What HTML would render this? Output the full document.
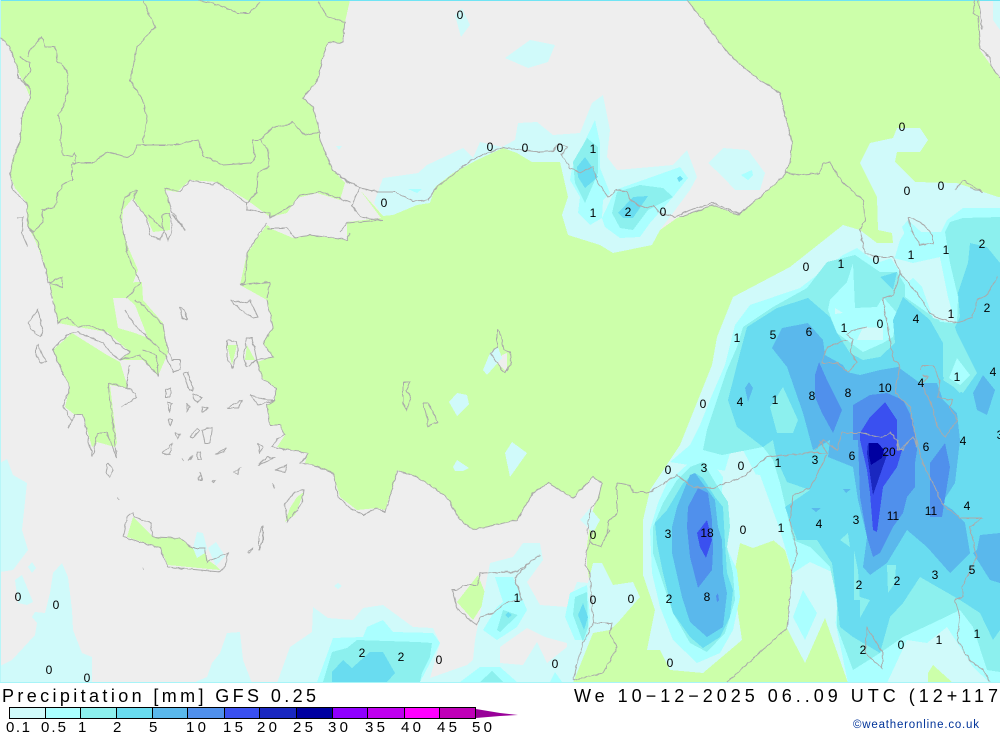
<!DOCTYPE html>
<html><head><meta charset="utf-8"><title>Precipitation</title>
<style>
html,body{margin:0;padding:0;background:#fff;width:1000px;height:733px;overflow:hidden}
svg{display:block}
.p polygon{shape-rendering:crispEdges}
.c1{fill:#d0fafa}.c2{fill:#aaffff}.c3{fill:#8cf0ee}.c4{fill:#69dcf0}.c5{fill:#5ab8ec}.c6{fill:#5090ec}.c7{fill:#3a50f0}.c8{fill:#1a28c0}.c9{fill:#0000a0}
.s{fill:#eeeeee}.l{fill:#ccffaa}
.b polyline{fill:none;stroke:#aaaaaa;stroke-width:1}
.n text{font:12px "Liberation Sans",sans-serif;fill:#000;text-anchor:middle}
.t{font-family:"Liberation Sans",sans-serif;fill:#000}
</style></head><body>
<svg width="1000" height="733" viewBox="0 0 1000 733" xmlns="http://www.w3.org/2000/svg">
<defs><filter id="w" x="0" y="0" width="1" height="1" filterUnits="objectBoundingBox"><feTurbulence type="fractalNoise" baseFrequency="0.22" numOctaves="1" seed="3"/><feDisplacementMap in="SourceGraphic" scale="3.5" xChannelSelector="R" yChannelSelector="G"/></filter></defs>
<rect width="1000" height="733" fill="#fff"/>
<g class="p">
<rect width="1000" height="683" fill="#ccffaa"/>
<polygon class="s" points="350,0 345,22 342,43 328,42 322,60 318,80 308,92 303,98 313,107 320,132 320,140 333,170 345,183 360,190 383,216 393,215 417,205 430,203 435,187 453,173 477,160 503,148 517,153 532,162 560,162 568,197 562,215 568,235 600,245 613,253 652,245 660,230 677,218 713,205 738,215 760,197 783,177 790,163 792,143 780,93 760,80 738,63 723,47 703,20 687,0"/>
<polygon class="s" points="980,0 1000,0 1000,78 980,50"/>
<polygon class="s" points="0,38 6,42 12,52 18,72 25,85 30,97 22,118 20,140 12,160 10,175 15,188 27,203 27,225 35,240 45,265 50,285 127,298 138,270 128,247 122,227 123,210 133,198 147,218 153,232 170,230 170,203 165,190 177,192 190,180 217,182 247,200 270,217 287,213 297,198 317,193 340,200 345,183 360,190 381,218 347,222 347,240 310,235 293,238 267,227 247,253 240,285 267,300 273,327 263,343 273,357 257,362 262,378 276,388 275,400 267,405 270,425 280,425 285,435 277,447 308,453 305,463 313,465 333,473 340,497 357,510 377,508 385,510 393,487 397,470 417,477 447,497 460,520 473,530 517,520 533,493 548,483 573,498 593,477 602,483 598,497 593,510 590,525 587,545 587,565 592,600 593,633 585,650 573,683 0,683"/>
<polygon class="l" points="50,285 142,282 143,300 163,323 168,353 158,376 143,360 120,360 130,352 107,332 78,327 58,323"/>
<polygon class="s" points="113,298 127,298 135,305 148,338 135,333 118,328"/>
<polygon class="l" points="53,350 72,333 107,355 120,362 128,388 110,385 117,443 115,447 97,442 92,447 83,415 75,415 65,407 70,387 60,367"/>
<polygon class="l" points="133,517 153,537 180,538 193,548 197,558 205,553 208,560 215,565 220,570 168,565 160,548 127,537"/>
<polygon class="l" points="304,492 297,497 290,508 285,522 295,515"/>
<polygon class="l" points="253,243 267,225 270,227 258,245"/>
<polygon class="l" points="227,345 237,345 232,365"/><polygon class="l" points="247,345 255,360 245,360"/>
<polygon class="l" points="457,602 478,575 487,598 473,620"/>
<polygon class="s" points="502,355 507,353 507,372 497,363"/>
<polygon class="c1" points="490,353 498,347 502,358 487,375 483,370"/>
<polygon class="c1" points="457,393 467,395 469,404 457,416 449,402"/>
<polygon class="c1" points="505,453 512,442 527,453 510,477"/>
<polygon class="c1" points="453,467 457,460 469,468 463,471 455,471"/>
<polygon class="c1" points="580,520 590,508 600,520 593,533"/>
<polygon class="c1" points="193,548 197,532 203,533 207,548 205,553 197,558"/>
<polygon class="c1" points="208,548 216,542 225,556 216,566"/>
<polygon class="c1" points="0,463 7,459 13,475 27,483 22,530 28,550 13,570 0,572"/>
<polygon class="c1" points="28,567 32,562 36,568 32,573"/>
<polygon class="c1" points="15,580 22,575 33,602 27,605 18,603"/>
<polygon class="c1" points="53,573 62,563 68,577 72,610 73,630 82,653 92,657 92,683 0,683 0,666 12,660 35,635 37,623 32,617 35,612 45,613 50,593"/>
<polygon class="c1" points="193,683 207,677 212,663 220,653 227,633 240,632 243,660 252,683"/>
<polygon class="c1" points="455,15 462,8 470,25 461,37"/>
<polygon class="c1" points="505,58 530,40 555,45 548,62 528,68"/>
<polygon class="c1" points="993,0 1000,0 1000,30 993,20"/>
<polygon class="c1" points="336,146 342,146 339,150"/>
<polygon class="c1" points="374,203 383,178 418,173 427,165 463,148 473,158 480,142 502,147 515,140 518,123 537,122 553,135 580,133 592,103 603,95 610,130 607,157 617,170 673,165 687,150 697,177 690,190 673,213 660,230 652,245 613,253 600,245 568,235 562,215 568,197 560,162 532,162 517,153 503,148 477,160 453,173 435,187 430,203 417,205 393,215 383,216"/>
<polygon class="c1" points="708,163 723,148 748,150 765,173 760,190 735,190 723,177"/>
<polygon class="c2" points="741,175 752,170 753,175 748,180"/>
<polygon class="c2" points="408,189 422,189 417,193"/>
<polygon class="c2" points="572,168 595,120 600,143 600,168 610,193 603,200 602,218 590,225 578,213 580,197 570,180"/>
<polygon class="c2" points="602,218 615,190 680,167 688,178 673,197 650,223 640,237 620,238 605,227"/>
<polygon class="c3" points="573,162 587,138 598,147 598,173 585,203 575,183"/>
<polygon class="c3" points="612,213 617,192 640,185 663,188 673,197 648,210 633,230 620,228"/>
<polygon class="c4" points="577,167 585,157 592,167 598,177 585,188 578,177"/>
<polygon class="c4" points="618,213 633,197 648,196 633,218 623,218"/>
<polygon class="c4" points="677,178 680,176 683,179 679,182"/>
<polygon class="c1" points="277,683 290,647 312,632 313,607 328,618 353,620 363,608 383,605 413,627 433,628 440,643 430,678 467,665 473,660 475,640 490,563 513,557 523,543 540,543 543,560 527,582 540,605 567,607 577,582 588,583 593,563 602,563 613,585 633,582 640,597 620,620 610,630 593,633 573,683"/>
<polygon class="s" points="500,647 527,628 545,637 567,643 567,647 547,663 537,642 523,665 500,663"/>
<polygon class="c1" points="334,586 338,583 342,586 338,589"/>
<polygon class="c2" points="495,577 513,577 527,610 517,627 497,640 483,630 497,607 503,602"/>
<polygon class="c3" points="497,630 503,610 518,615 500,632"/>
<polygon class="c4" points="505,615 508,612 512,615 508,618"/>
<polygon class="c2" points="565,617 570,593 587,585 590,617 587,640 575,640"/>
<polygon class="c3" points="573,615 575,597 587,592 588,627 583,642"/>
<polygon class="c4" points="578,615 583,603 588,617 584,630"/>
<polygon class="c2" points="317,682 328,652 333,638 363,637 367,627 383,620 393,632 433,633 440,643 430,663 420,682"/>
<polygon class="c3" points="323,682 332,652 347,648 357,640 417,642 432,643 430,657 422,673 420,682"/>
<polygon class="c4" points="332,682 332,672 343,660 352,668 370,652 383,652 395,673 387,682"/>
<polygon class="c2" points="460,682 480,667 500,667 517,682"/>
<polygon class="c3" points="480,682 492,671 503,682"/>
<polygon class="c2" points="550,682 555,672 562,682"/>
<polygon class="c1" points="897,128 920,128 928,140 920,152 897,152 895,162 915,182 957,183 998,197 1000,197 1000,683 848,683 825,618 805,663 793,640 787,628 792,573 785,550 773,540 753,548 740,543 733,580 742,640 703,673 670,670 660,650 647,650 655,610 643,575 643,520 650,490 680,445 690,420 700,395 712,365 717,337 733,297 790,267 843,225 860,230 877,243 893,243 892,233 878,230 877,197 860,163 870,143 893,138"/>
<polygon class="c2" points="1000,208 963,208 947,220 941,232 905,232 900,240 895,257 877,263 857,248 843,255 800,288 750,305 735,325 725,365 712,395 700,425 690,445 670,462 720,470 760,475 780,530 793,575 835,620 848,683 1000,683"/>
<polygon class="c2" points="658,503 667,483 690,462 707,455 723,477 732,520 723,540 737,570 740,597 733,630 720,653 697,663 673,640 660,607 652,573 650,530"/>
<polygon class="c2" points="902,227 908,220 930,240 933,245 910,248"/>
<polygon class="c3" points="910,230 915,243 910,245"/>
<polygon class="c1" points="723,477 730,453 743,450 757,477 765,497 780,530 775,540 753,548 740,543 730,540 720,520"/>
<polygon class="c1" points="793,573 810,562 832,572 837,607 835,630 842,655 848,683 825,618 805,663 793,640 787,628"/>
<polygon class="c2" points="793,617 803,590 817,613 805,640"/>
<polygon class="c1" points="887,683 907,640 927,643 947,627 960,647 973,667 990,683"/>
<polygon class="l" points="928,673 933,665 953,683 928,683"/>
<polygon class="c3" points="737,347 743,327 773,307 807,288 827,262 855,255 880,272 897,272 905,285 905,297 932,316 947,322 957,323 958,297 950,263 945,232 950,222 963,218 1000,217 1000,672 987,670 973,627 960,610 933,623 903,637 880,653 853,670 837,627 837,600 830,567 810,547 793,540 787,513 780,483 773,460 763,447 722,455 703,450 707,430 717,400 727,370"/>
<polygon class="c3" points="663,503 677,480 690,467 703,462 718,487 728,502 730,527 727,547 733,573 735,600 725,633 707,652 690,643 673,613 662,580 653,553 653,527"/>
<polygon class="c2" points="830,300 847,282 853,263 855,308 877,307 883,297 897,313 893,337 883,343 863,352 837,333 828,310"/>
<polygon class="c2" points="905,232 941,232 944,255 948,297 955,323 940,322 925,290 912,272 895,257"/>
<polygon class="c1" points="890,257 913,263 940,257 948,297 955,323 947,322 933,318 922,287 913,278 908,282 900,272"/>
<polygon class="c1" points="863,327 883,328 883,340 857,340"/>
<polygon class="c1" points="835,308 843,313 835,314"/>
<polygon class="c4" points="740,353 747,327 777,308 808,298 830,317 837,333 850,353 863,360 880,357 895,343 893,320 903,297 930,320 943,343 943,377 960,393 977,373 957,333 955,327 960,317 958,293 968,263 970,243 987,247 1000,263 1000,630 993,640 980,613 960,600 920,577 903,603 890,617 880,653 853,637 840,627 837,600 832,563 817,540 797,540 785,507 810,490 787,482 777,460 773,440 763,447 737,427 728,400"/>
<polygon class="c4" points="880,277 897,272 893,290"/>
<polygon class="c4" points="667,510 683,483 695,473 703,478 715,497 723,507 725,543 727,573 733,590 730,617 720,637 703,648 690,637 673,613 663,573 657,543 655,523"/>
<polygon class="c3" points="770,407 783,387 798,420 793,433 777,433"/>
<polygon class="c3" points="840,540 848,533 850,547"/>
<polygon class="c3" points="854,550 858,570 860,600 854,600"/>
<polygon class="c3" points="887,565 896,565 895,583 888,593"/>
<polygon class="c3" points="860,597 870,600 860,618"/>
<polygon class="c3" points="943,380 957,353 977,373 963,393"/>
<polygon class="c2" points="949,378 957,358 970,375 960,385"/>
<polygon class="c5" points="772,348 782,328 808,323 823,340 825,355 843,365 847,372 860,375 880,370 898,367 920,383 937,383 943,400 957,413 960,440 955,483 942,503 953,510 965,523 970,553 950,573 927,547 907,530 887,563 870,575 863,567 867,537 858,500 853,467 828,457 830,440 813,450 803,413 787,367"/>
<polygon class="c5" points="977,550 980,535 1000,533 1000,583 990,580 973,553"/>
<polygon class="c5" points="973,393 983,375 995,390 987,415 977,410"/>
<polygon class="c5" points="745,388 749,382 753,388 748,402"/>
<polygon class="c5" points="843,489 851,489 846,493"/>
<polygon class="c5" points="811,508 821,508 816,512"/>
<polygon class="c5" points="677,507 690,475 695,473 715,500 718,527 722,540 723,573 727,593 723,627 707,637 690,622 682,597 672,553 672,527"/>
<polygon class="c6" points="815,375 819,362 827,380 842,410 833,433 822,413 815,397"/>
<polygon class="c6" points="853,405 870,395 887,393 903,400 913,420 917,450 915,463 915,487 907,497 903,513 893,527 880,553 873,557 867,537 860,497 858,440 853,440"/>
<polygon class="c6" points="930,463 945,443 950,467 942,517 930,517"/>
<polygon class="c6" points="688,507 698,488 708,493 712,520 713,550 712,570 698,588 690,557 687,527"/>
<polygon class="c6" points="716,596 718,593 719,600 717,602"/>
<polygon class="c7" points="860,433 870,417 885,402 897,420 897,450 902,450 897,467 883,487 877,532 873,530 870,493 867,470 860,440"/>
<polygon class="c7" points="697,533 707,520 712,540 706,558 700,547"/>
<polygon class="c8" points="868,443 887,455 873,495 867,453"/>
<polygon class="c9" points="869,443 878,443 884,450 882,458 871,465 869,455"/>
<rect x="0" y="0" width="1000" height="1" fill="#70e4f4"/>
<rect x="0" y="0" width="1" height="683" fill="#b8f6f8"/>
<rect x="0" y="682" width="1000" height="1" fill="#a8f4f8"/>
</g>
<g class="b" filter="url(#w)">
<rect x="0" y="0" width="1000" height="683" fill="none"/>
<polyline points="0,38 6,42 12,52 18,70 18,78 30,88 30,98 22,115 20,140 13,160 10,173 13,190 27,203 28,227 33,232 43,222 42,210 55,207 57,197 62,185 72,180 72,173 72,165 75,163 75,153 72,157 63,155 60,140 62,125 58,115 62,110 68,90 67,70 58,62 55,47 45,47 42,37 30,50 28,57"/>
<polyline points="19,57 30,63 30,72 23,80 30,88"/>
<polyline points="72,163 93,163 107,152 127,157 133,155 137,145 143,145 157,145 175,145 198,140 203,155 223,165 250,163 255,158 252,140 260,140 268,150 269,167 258,173 257,192 247,203"/>
<polyline points="143,0 155,27 137,47 133,67 130,80 143,100 147,120 143,143"/>
<polyline points="197,0 213,3 238,13 250,13 260,2"/>
<polyline points="318,2 328,17 345,22 342,43 328,42 322,60 318,80 308,92 303,98 313,107 320,132 320,140 333,170 347,182 350,183"/>
<polyline points="260,140 273,127 287,125 292,122 305,135 320,132"/>
<polyline points="247,203 247,210 270,213 270,218 293,205 300,195 320,192 350,202"/>
<polyline points="267,223 253,243 247,253 245,283 240,285 270,282 267,298"/>
<polyline points="267,228 287,228 295,238 310,235 347,240 350,233"/>
<polyline points="247,203 217,182 213,185 190,180 180,192 165,188 170,207 172,212 185,230 172,215"/>
<polyline points="148,215 158,225 165,230 160,240 150,235 147,218"/>
<polyline points="162,215 170,213 172,230 168,240 162,225 162,215"/>
<polyline points="137,190 125,197 120,217 125,238 128,257 138,277 140,283 127,298"/>
<polyline points="137,190 133,200 147,218"/>
<polyline points="28,227 37,240 45,267 48,283 62,277 62,287 50,283 52,298"/>
<polyline points="17,218 23,217 22,233 28,247"/>
<polyline points="53,300 58,323 67,317 78,327 88,325 107,332 113,340 130,352 120,360 113,355 103,343 90,338 78,332 67,335 53,350 60,367 70,387 63,407 72,420 68,428 75,415 83,415 90,447 93,457 97,433 107,433 117,458 108,383 127,388 132,390 137,397 122,407"/>
<polyline points="120,360 140,355 158,376 157,355 143,350"/>
<polyline points="130,365 127,380 127,388"/>
<polyline points="135,300 143,305 163,325 167,345 172,360 180,360 180,370 173,372 165,355 150,340 135,325 125,310"/>
<polyline points="36,347 38,345 42,355 47,361 40,363 36,355 36,347"/>
<polyline points="28,323 38,310 43,333 40,337 30,328 28,323"/>
<polyline points="108,463 113,470 110,477 106,473 108,463"/>
<polyline points="180,307 185,310 187,320 182,318 180,307"/>
<polyline points="227,340 237,342 238,353 232,368 227,357 227,340"/>
<polyline points="247,338 252,338 257,360 247,367 243,357 247,338"/>
<polyline points="230,300 243,303 250,300 258,317 253,318 240,310 230,300"/>
<polyline points="183,373 188,372 193,390 189,390 183,373"/>
<polyline points="192,393 202,398 197,403 193,398 192,393"/>
<polyline points="166,390 171,388 170,397 166,397 166,390"/>
<polyline points="168,403 172,403 169,412 168,403"/>
<polyline points="187,403 190,407 187,412 187,403"/>
<polyline points="202,407 208,408 203,412 202,407"/>
<polyline points="227,408 242,400 238,408 227,408"/>
<polyline points="250,395 267,400 275,400 258,405 250,395"/>
<polyline points="168,420 173,420 170,425 168,420"/>
<polyline points="175,432 180,435 177,439 175,432"/>
<polyline points="190,437 197,428 200,430 193,438 190,437"/>
<polyline points="202,430 212,427 210,443 205,443 202,430"/>
<polyline points="162,453 168,448 172,443 170,455 162,453"/>
<polyline points="197,453 200,452 202,460 198,460 197,453"/>
<polyline points="215,455 227,447 223,452 215,455"/>
<polyline points="190,460 193,455 188,461"/>
<polyline points="182,458 184,461"/>
<polyline points="233,472 240,468 237,475 233,472"/>
<polyline points="200,472 202,480 199,480 200,472"/>
<polyline points="212,481 215,480 213,483 212,481"/>
<polyline points="258,443 263,447 260,453 258,443"/>
<polyline points="258,465 267,457 274,458 263,463 258,465"/>
<polyline points="275,470 287,465 285,472 275,470"/>
<polyline points="272,483 275,488"/>
<polyline points="285,503 295,492 304,490 302,503 287,522 285,503"/>
<polyline points="263,525 263,540 259,550 259,537 263,525"/>
<polyline points="248,552 253,548 250,553 248,552"/>
<polyline points="127,517 133,513 135,517 150,522 153,537 180,538 193,548 205,548 207,562 228,553 225,567 220,572 168,567 160,548 127,538 123,537 127,517"/>
<polyline points="118,497 119,500"/>
<polyline points="142,567 143,570"/>
<polyline points="267,300 273,327 263,343 273,357 257,360 262,378 276,388 275,400 267,405 270,425 280,425 285,435 277,440 272,447 308,453 305,458 300,463 313,465 333,473 338,497 350,508 363,515 377,508 385,512 393,487 397,470 417,477 447,497 460,520 473,530 517,520 533,493 548,483 573,498 593,477 602,483 598,500 590,510 587,535"/>
<polyline points="617,483 617,513 608,522 607,537"/>
<polyline points="617,483 630,485 633,493 640,492 650,492 677,475 693,487 713,488 743,477 767,457 810,453 827,453 820,440"/>
<polyline points="828,453 810,488 793,495 790,520 797,553 792,573 787,628 727,682"/>
<polyline points="593,530 587,550 585,563 590,573 593,623 612,623 610,633 617,647 603,673 573,680"/>
<polyline points="593,623 583,643 573,680"/>
<polyline points="610,530 600,547 590,542"/>
<polyline points="540,555 530,562 517,572 480,573 477,585 463,585 457,590 452,590 457,608 467,618 477,625 480,617 493,613 507,602 522,600 515,578 530,562"/>
<polyline points="955,600 963,597 962,587 977,557 970,527 982,518 960,518 947,508 942,503 933,483 922,462 917,440"/>
<polyline points="955,600 960,617 957,640 970,660 983,670 990,682"/>
<polyline points="867,627 865,653 882,668 883,653 867,627"/>
<polyline points="898,440 897,450 903,450 910,440"/>
<polyline points="785,172 797,175 820,173 823,163 830,163 843,183 863,200 865,220 860,230 865,253 877,257 893,257 900,273 893,295 882,298 888,327 893,360 900,365 895,393 910,407 917,447"/>
<polyline points="900,273 920,297 930,313 937,318 957,323 972,318 977,300 987,295 998,277"/>
<polyline points="920,370 922,365 933,365 940,380 938,397 952,400 950,408 958,420 945,437 937,427 933,407 925,392 922,383 928,377 922,375"/>
<polyline points="815,450 823,440 837,450 842,433 860,433 883,438 890,432 897,440 900,450 913,437 917,447"/>
<polyline points="827,347 822,363 837,363 848,372 857,363 850,352 853,340 847,335 853,330 867,327"/>
<polyline points="827,347 847,340"/>
<polyline points="975,0 973,13 978,17 980,48 990,58 992,68 1000,78"/>
<polyline points="978,0 980,13 982,30"/>
<polyline points="908,217 920,222 933,235 933,243 920,245 910,227 908,217"/>
<polyline points="955,190 963,180 983,192 970,188"/>
<polyline points="687,0 703,20 723,47 738,63 760,80 780,93 792,143 790,163 783,177 760,197 738,215 713,205 680,217"/>
<polyline points="340,177 360,188 378,192 395,192 413,201 428,200 437,187 455,173 475,158 503,147 520,150 540,152 553,151 558,144 567,147 562,155 570,168 580,173 592,167 598,183 608,197 617,190 627,192 632,202 647,208 653,205 660,213 675,217 693,209 713,203 740,214"/>
<polyline points="360,188 352,205 360,217 382,220 347,223 340,232"/>
<polyline points="403,382 410,382 406,390 411,397 407,410 403,403 403,382"/>
<polyline points="423,403 428,403 438,422 428,427 427,417 423,403"/>
<polyline points="490,353 497,347 497,330 500,332 504,350 510,352 511,363 505,373 497,363 490,353"/>
</g>
<g class="n">
<text x="460" y="19">0</text><text x="490" y="151">0</text><text x="525" y="152">0</text><text x="560" y="152">0</text><text x="593" y="153">1</text><text x="384" y="207">0</text><text x="593" y="217">1</text><text x="628" y="216">2</text><text x="663" y="216">0</text><text x="902" y="131">0</text><text x="907" y="195">0</text><text x="941" y="190">0</text><text x="806" y="271">0</text><text x="841" y="268">1</text><text x="876" y="264">0</text><text x="911" y="259">1</text><text x="946" y="254">1</text><text x="982" y="248">2</text><text x="916" y="323">4</text><text x="951" y="318">1</text><text x="987" y="312">2</text><text x="880" y="328">0</text><text x="844" y="332">1</text><text x="809" y="336">6</text><text x="773" y="339">5</text><text x="737" y="342">1</text><text x="993" y="376">4</text><text x="957" y="381">1</text><text x="921" y="387">4</text><text x="885" y="392">10</text><text x="848" y="397">8</text><text x="812" y="400">8</text><text x="775" y="404">1</text><text x="740" y="406">4</text><text x="703" y="408">0</text><text x="963" y="445">4</text><text x="926" y="451">6</text><text x="889" y="456">20</text><text x="852" y="460">6</text><text x="815" y="464">3</text><text x="778" y="467">1</text><text x="741" y="470">0</text><text x="704" y="472">3</text><text x="668" y="474">0</text><text x="1000" y="439">3</text><text x="967" y="510">4</text><text x="931" y="515">11</text><text x="893" y="520">11</text><text x="856" y="524">3</text><text x="819" y="528">4</text><text x="781" y="532">1</text><text x="743" y="534">0</text><text x="707" y="537">18</text><text x="668" y="538">3</text><text x="593" y="539">0</text><text x="972" y="574">5</text><text x="935" y="579">3</text><text x="897" y="585">2</text><text x="859" y="589">2</text><text x="707" y="601">8</text><text x="669" y="603">2</text><text x="631" y="603">0</text><text x="593" y="604">0</text><text x="517" y="602">1</text><text x="18" y="601">0</text><text x="56" y="609">0</text><text x="977" y="638">1</text><text x="939" y="644">1</text><text x="901" y="649">0</text><text x="863" y="654">2</text><text x="362" y="657">2</text><text x="401" y="661">2</text><text x="439" y="664">0</text><text x="555" y="668">0</text><text x="670" y="667">0</text><text x="49" y="674">0</text><text x="87" y="682">0</text>
</g>
<text class="t" x="2" y="702" font-size="18" textLength="314" lengthAdjust="spacing">Precipitation [mm] GFS 0.25</text>
<text class="t" x="574" y="702" font-size="18" textLength="424" lengthAdjust="spacing">We 10−12−2025 06..09 UTC (12+117</text>
<text x="853" y="728" font-family="Liberation Sans, sans-serif" font-size="11.5" fill="#003399" textLength="126" lengthAdjust="spacing">©weatheronline.co.uk</text>
<g shape-rendering="crispEdges" stroke="#000" stroke-width="1">
<rect x="9.5" y="707.5" width="36" height="11" fill="#d0fafa"/>
<rect x="45.5" y="707.5" width="35" height="11" fill="#aaffff"/>
<rect x="80.5" y="707.5" width="36" height="11" fill="#8cf0ee"/>
<rect x="116.5" y="707.5" width="36" height="11" fill="#69dcf0"/>
<rect x="152.5" y="707.5" width="35" height="11" fill="#5ab8ec"/>
<rect x="187.5" y="707.5" width="37" height="11" fill="#5090ec"/>
<rect x="224.5" y="707.5" width="35" height="11" fill="#3a50f0"/>
<rect x="259.5" y="707.5" width="37" height="11" fill="#1a28c0"/>
<rect x="296.5" y="707.5" width="36" height="11" fill="#0000a0"/>
<rect x="332.5" y="707.5" width="35" height="11" fill="#9000ff"/>
<rect x="367.5" y="707.5" width="37" height="11" fill="#c000f0"/>
<rect x="404.5" y="707.5" width="35" height="11" fill="#ff00ff"/>
<rect x="439.5" y="707.5" width="36" height="11" fill="#c000b8"/>
</g>
<polygon points="476,709 500,713 518,715 500,716 476,718" fill="#990099"/>
<g class="t" font-size="15">
<text x="6" y="732" textLength="24" lengthAdjust="spacing">0.1</text><text x="41" y="732" textLength="25" lengthAdjust="spacing">0.5</text><text x="78" y="732">1</text><text x="113" y="732">2</text><text x="149" y="732">5</text><text x="186" y="732" textLength="20" lengthAdjust="spacing">10</text><text x="223" y="732" textLength="20" lengthAdjust="spacing">15</text><text x="257" y="732" textLength="20" lengthAdjust="spacing">20</text><text x="293" y="732" textLength="20" lengthAdjust="spacing">25</text><text x="328" y="732" textLength="20" lengthAdjust="spacing">30</text><text x="365" y="732" textLength="20" lengthAdjust="spacing">35</text><text x="401" y="732" textLength="20" lengthAdjust="spacing">40</text><text x="437" y="732" textLength="20" lengthAdjust="spacing">45</text><text x="472" y="732" textLength="20" lengthAdjust="spacing">50</text>
</g>
</svg>
</body></html>
